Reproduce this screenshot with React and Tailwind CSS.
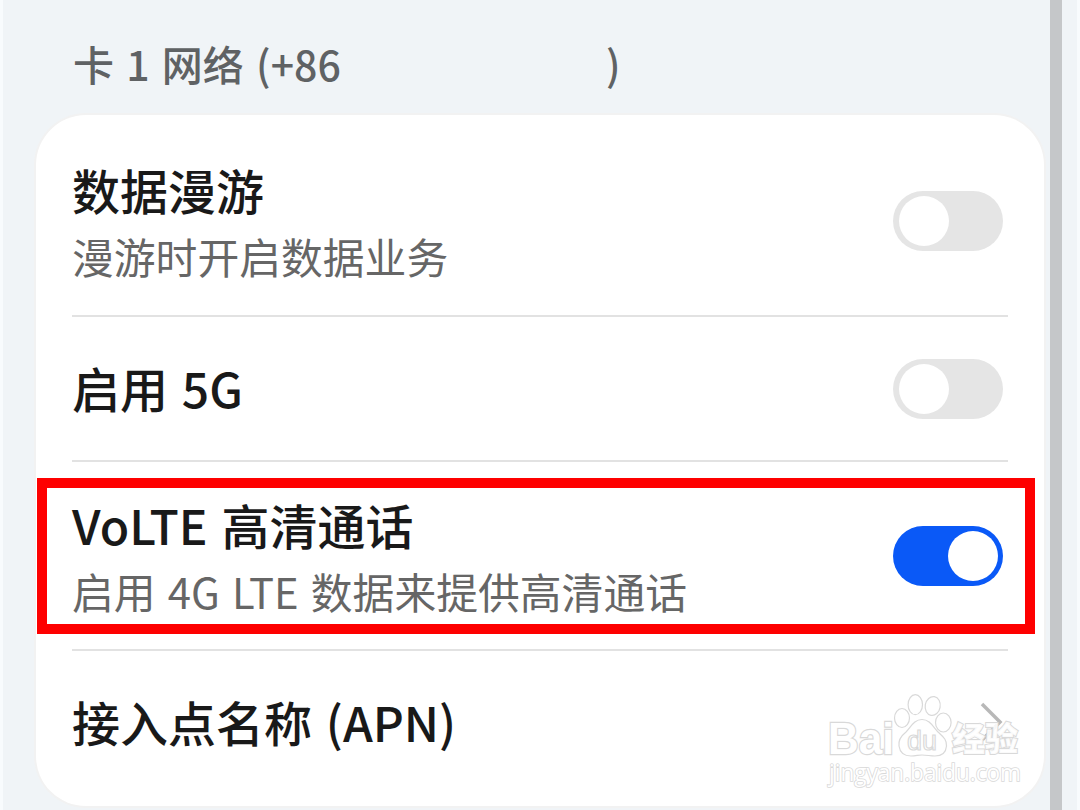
import React, { useState } from "react";

const Toggle = ({ checked, onChange, className }) => (
  <button
    type="button"
    role="switch"
    aria-checked={checked}
    onClick={onChange}
    className={`flex h-[60px] w-[110px] shrink-0 items-center rounded-full px-[5.5px] ${
      checked ? "justify-end bg-[#0a59f7]" : "justify-start bg-[#e5e5e5]"
    } ${className}`}
  >
    <span className="h-[50px] w-[50px] rounded-full bg-white" />
  </button>
);

const Title = ({ children }) => (
  <p className="h-16 text-[48px] leading-[64px] font-medium whitespace-pre text-[#191919] [word-spacing:3px]">
    {children}
  </p>
);

const Desc = ({ children }) => (
  <p className="mt-[7px] h-14 text-[41.8px] leading-[56px] whitespace-pre text-[#666666] [word-spacing:2.8px]">
    {children}
  </p>
);

const Divider = () => <div className="mr-9 h-[2px] shrink-0 bg-[#e2e2e2]" />;

const Watermark = () => (
  <svg
    className="absolute top-[575px] left-[784px] h-[105px] w-[210px]"
    viewBox="820 690 210 105"
    fill="#ffffff"
    stroke="#d9d9d9"
    strokeWidth="1.2"
  >
    <g fillOpacity="0.8">
      <ellipse cx="902" cy="718" rx="7.5" ry="9.5" />
      <ellipse cx="915.3" cy="704.7" rx="7.2" ry="10" />
      <ellipse cx="932.7" cy="706" rx="7.5" ry="9.5" transform="rotate(10 932.7 706)" />
      <ellipse cx="943.3" cy="722.5" rx="7.8" ry="9.5" />
      <path d="M922 719.500C914 719.500 911 727 906 732C901 736 898 740 899 746C900 753 905 756 911 756C916 756 918 755 922 755C927 755 930 756 935 756C942 756 946 752 946.500 746C947 739 942 736 938 732C933 727 930 719.500 922 719.500Z" />
    </g>
    <g fontFamily="'Liberation Sans', sans-serif" fontWeight="700">
      <text
        x="828"
        y="754"
        fontSize="45"
        stroke="#d9d9d9"
        strokeWidth="2.4"
        paintOrder="stroke"
        textLength="66"
        lengthAdjust="spacingAndGlyphs"
      >
        Bai
      </text>
      <text x="907" y="750" fontSize="27" fontWeight="400" textLength="30" lengthAdjust="spacingAndGlyphs">
        du
      </text>
    </g>
    <text
      x="952"
      y="751"
      fontSize="33"
      fontWeight="900"
      strokeWidth="2"
      paintOrder="stroke"
      fillOpacity="0.9"
      fontFamily="'Noto Sans CJK SC', sans-serif"
      textLength="66"
    >
      经验
    </text>
    <text
      x="829"
      y="781"
      fontSize="23"
      strokeWidth="1.6"
      paintOrder="stroke"
      fontFamily="'Open Sans', sans-serif"
      textLength="192"
      lengthAdjust="spacingAndGlyphs"
    >
      jingyan.baidu.com
    </text>
  </svg>
);

const App = () => {
  const [roaming, setRoaming] = useState(false);
  const [fiveG, setFiveG] = useState(false);
  const [volte, setVolte] = useState(true);

  return (
    <div className="flex h-[810px] w-[1080px] justify-between overflow-hidden border-x-[3px] border-l-[#f8fbfd] border-r-[#f8fbfd] bg-[#f0f4f7] font-['Noto_Sans_CJK_SC',sans-serif]">
      <div className="flex flex-col pl-[33px]">
        <h2 className="flex h-[115px] items-start pt-[35px] pl-[37px] text-[41px] leading-[56px] font-medium text-[#5f6264] [word-spacing:3px]">
          <span className="w-[533px] whitespace-pre">卡 1 网络 (+86</span>
          <span>)</span>
        </h2>

        <div className="relative flex h-[691px] w-[1008px] flex-col rounded-[50px] bg-white pl-9 shadow-[0_0_0_2px_#f2f2f2]">
          <div className="flex h-[200px] justify-between pr-[41px]">
            <div className="pt-[42px]">
              <Title>数据漫游</Title>
              <Desc>漫游时开启数据业务</Desc>
            </div>
            <Toggle
              checked={roaming}
              onChange={() => setRoaming(!roaming)}
              className="mt-[76px]"
            />
          </div>
          <Divider />

          <div className="flex h-[143px] justify-between pr-[41px]">
            <div className="pt-[38px]">
              <Title>启用 5G</Title>
            </div>
            <Toggle
              checked={fiveG}
              onChange={() => setFiveG(!fiveG)}
              className="mt-[42px]"
            />
          </div>
          <Divider />

          <div className="relative flex h-[187px] justify-between pr-[41px]">
            <div className="pt-[30px]">
              <Title>VoLTE 高清通话</Title>
              <Desc>启用 4G LTE 数据来提供高清通话</Desc>
            </div>
            <Toggle
              checked={volte}
              onChange={() => setVolte(!volte)}
              className="mt-[64px]"
            />
            <div className="pointer-events-none absolute top-[16px] -left-[35px] h-[156px] w-[998px] border-[10px] border-[#fe0000]" />
          </div>
          <Divider />

          <div className="flex flex-1 justify-between pr-[38px]">
            <div className="pt-[38px]">
              <Title>接入点名称 (APN)</Title>
            </div>
            <svg
              className="mt-[50px] h-[44px] w-[28px]"
              viewBox="0 0 28 44"
              fill="none"
              stroke="#b8b8b8"
              strokeWidth="3.5"
            >
              <path d="M4 3L22 21L4 39" />
            </svg>
          </div>
          <Watermark />
        </div>
      </div>

      <div className="mr-[15px] w-3 bg-[#c5c7c9]" />
    </div>
  );
};

export default App;
